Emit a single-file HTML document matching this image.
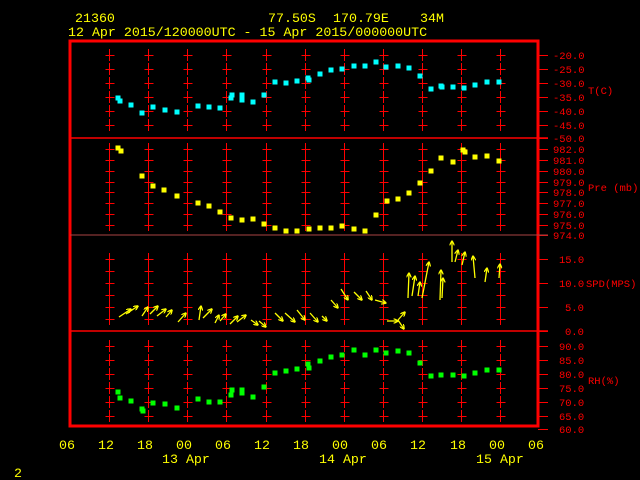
<!DOCTYPE html>
<html><head><meta charset="utf-8"><style>
html,body{margin:0;padding:0;background:#000;}
svg{display:block}
text{font-family:"Liberation Mono",monospace;}
</style></head><body>
<svg id="s" width="640" height="480" xmlns="http://www.w3.org/2000/svg">
<defs><marker id="ah" viewBox="0 0 10 10" refX="9" refY="5" markerWidth="5" markerHeight="5" markerUnits="userSpaceOnUse" orient="auto"><path d="M0,0 L10,5 L0,10" fill="none" stroke="#ff0" stroke-width="2.5"/></marker></defs>
<rect x="0" y="0" width="640" height="480" fill="#000"/>
<g fill="#ff0" font-size="13.3">
<text x="75" y="22">21360</text>
<text x="268" y="22">77.50S</text><text x="333" y="22">170.79E</text><text x="420" y="22">34M</text>
<text x="68" y="36">12 Apr 2015/120000UTC - 15 Apr 2015/000000UTC</text>
<text x="59" y="449">06</text><text x="98" y="449">12</text><text x="137" y="449">18</text><text x="176" y="449">00</text><text x="215" y="449">06</text><text x="254" y="449">12</text><text x="293" y="449">18</text><text x="332" y="449">00</text><text x="371" y="449">06</text><text x="410" y="449">12</text><text x="450" y="449">18</text><text x="489" y="449">00</text><text x="528" y="449">06</text>
<text x="162" y="463">13 Apr</text><text x="319" y="463">14 Apr</text><text x="476" y="463">15 Apr</text>
<text x="14" y="477">2</text>
</g>
<g id="grid" stroke="#f00" stroke-width="1" shape-rendering="crispEdges"></g>
<g id="pts"></g>
<g id="wind" stroke="#ff0" stroke-width="1.3" fill="none"></g>
<g fill="#f00" font-size="10.5" id="lab"></g>
<rect x="70" y="41" width="468" height="385" fill="none" stroke="#f00" stroke-width="3"/>
<line x1="70" y1="138" x2="548" y2="138" stroke="#f00" stroke-width="1.5"/>
<line x1="70" y1="235" x2="548" y2="235" stroke="#a44" stroke-width="1"/>
<line x1="70" y1="331" x2="548" y2="331" stroke="#f00" stroke-width="1.5"/>
<g fill="#f00" font-size="10.5">
<text x="588" y="94">T(C)</text>
<text x="588" y="191">Pre (mb)</text>
<text x="586" y="287">SPD(MPS)</text>
<text x="588" y="384">RH(%)</text>
</g>
</svg>
<script>
var NS="http://www.w3.org/2000/svg",g=document.getElementById('grid'),lab=document.getElementById('lab'),pts=document.getElementById('pts'),wd=document.getElementById('wind');
function el(p,t,a,txt){var e=document.createElementNS(NS,t);for(var k in a)e.setAttribute(k,a[k]);if(txt)e.textContent=txt;p.appendChild(e);return e;}
function ln(x1,y1,x2,y2){el(g,'line',{x1:x1,y1:y1,x2:x2,y2:y2});}
var panels=[
 [[55,'-20.0'],[69,'-25.0'],[83,'-30.0'],[97,'-35.0'],[111,'-40.0'],[125,'-45.0'],[138,'-50.0']],
 [[149,'982.0'],[160,'981.0'],[171,'980.0'],[182,'979.0'],[192,'978.0'],[203,'977.0'],[214,'976.0'],[225,'975.0'],[235,'974.0']],
 [[259,'15.0'],[283,'10.0'],[307,'5.0'],[331,'0.0']],
 [[346,'90.0'],[360,'85.0'],[374,'80.0'],[388,'75.0'],[402,'70.0'],[416,'65.0'],[429,'60.0']]];
var inner=[[55,69,83,97,111,125],[149,160,171,182,192,203,214,225],[259,271,283,295,307,319],[346,360,374,388,402,416]];
inner.forEach(function(ys){for(var i=1;i<=11;i++){var x=Math.round(70+i*39.1)+.5;ys.forEach(function(y){ln(x,y-6,x,y+6);ln(x-4,y+.5,x+5,y+.5);});}});
panels.forEach(function(p){p.forEach(function(t){ln(538,t[0]+.5,548,t[0]+.5);var w=t[1].length*6;el(lab,'text',{x:583-w,y:t[0]+4},t[1]);});});
function dots(arr,c){arr.forEach(function(p){el(pts,'rect',{x:p[0]-2.5,y:p[1]-2.5,width:5,height:5,fill:c});});}
dots([[118,98],[120,101],[131,105],[142,113],[153,107],[165,110],[177,112],[198,106],[209,107],[220,108],[231,98],[232,95],[242,95],[242,100],[253,102],[264,95],[275,82],[286,83],[297,81],[308,78],[309,80],[320,74],[331,70],[342,69],[354,66],[365,66],[376,62],[386,67],[398,66],[409,68],[420,76],[431,89],[441,86],[442,87],[453,87],[464,88],[475,85],[487,82],[499,82]],'#0ff');
dots([[118,148],[121,151],[142,176],[153,186],[164,190],[177,196],[198,203],[209,206],[220,212],[231,218],[242,220],[253,219],[264,224],[275,228],[286,231],[297,231],[309,229],[320,228],[331,228],[342,226],[354,229],[365,231],[376,215],[387,201],[398,199],[409,193],[420,183],[431,171],[441,158],[453,162],[463,150],[465,152],[475,157],[487,156],[499,161]],'#ff0');
dots([[118,392],[120,398],[131,401],[142,409],[143,411],[153,403],[165,404],[177,408],[198,399],[209,402],[220,402],[231,395],[232,390],[242,390],[242,393],[253,397],[264,387],[275,373],[286,371],[297,369],[308,364],[309,368],[320,361],[331,357],[342,355],[354,350],[365,355],[376,350],[386,353],[398,351],[409,353],[420,363],[431,376],[441,375],[453,375],[464,376],[475,373],[487,370],[499,370]],'#0f0');
var W=[[119,317,131,309],[126,314,138,306],[142,316,148,307],[150,314,158,306],[157,316,166,309],[166,317,172,310],[178,322,186,313],[199,320,201,306],[203,318,212,309],[215,323,219,315],[220,321,226,314],[230,324,238,316],[237,322,246,315],[251,320,258,325],[259,321,266,327],[275,313,283,321],[285,313,295,322],[297,310,305,320],[310,313,318,322],[322,316,327,321],[331,300,338,308],[341,289,348,300],[354,292,362,300],[366,291,372,300],[375,300,386,303],[387,321,398,321],[398,320,405,312],[398,320,404,329],[408,298,409,273],[412,296,415,276],[422,298,429,262],[418,296,420,282],[440,300,441,270],[442,298,443,278],[452,262,452,241],[455,262,458,250],[462,265,465,252],[475,278,473,256],[485,282,487,268],[499,278,500,264]];
W.forEach(function(a){el(wd,'line',{x1:a[0],y1:a[1],x2:a[2],y2:a[3],'marker-end':'url(#ah)'});});
</script>
</body></html>
